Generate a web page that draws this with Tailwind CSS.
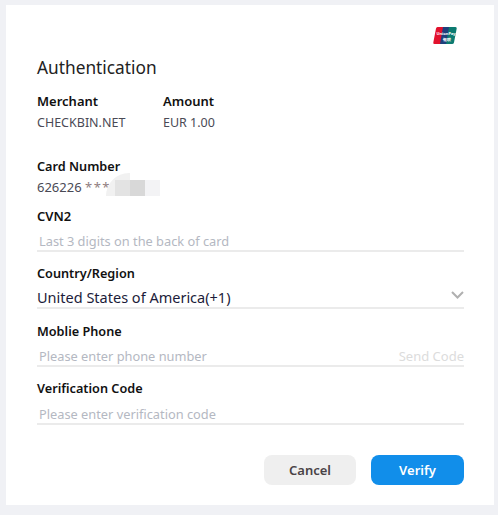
<!DOCTYPE html>
<html lang="en">
<head>
  <meta charset="UTF-8">
  <title>Authentication</title>
  <script src="https://cdn.jsdelivr.net/npm/@tailwindcss/browser@4"></script>
</head>
<body class="bg-[#f0f1f5] h-[515px] overflow-hidden font-['Noto_Sans',sans-serif]">
  <div class="ml-[6px] mt-[5px] w-[488px] h-[500px] bg-white pl-[31px] pr-[30px] pt-[22px]">

    <div class="flex justify-end h-[18px] pr-[7px]">
      <svg width="24" height="18" viewBox="0 0 24 18">
        <path d="M4.500 0H11L8 17H1.500Q0 17 .3 15.500L3 1.500Q3.300 0 4.500 0z" fill="#e2112d"/>
        <path d="M10 0h8l-3 17H7z" fill="#1d3f7c"/>
        <path d="M16 0h6.500Q24 0 23.700 1.500L21 15.500Q20.700 17 19 17H13z" fill="#0c7a70"/>
        <text x="3.500" y="8" font-size="4" font-weight="700" fill="#fff">UnionPay</text>
        <text x="10" y="14" font-size="4" font-weight="700" fill="#fff">银联</text>
      </svg>
    </div>

    <h1 class="mt-[10px] text-[17.300px] leading-[26px] text-[#222]">Authentication</h1>

    <div class="flex mt-[10px] text-[13px] leading-[20px]">
      <div class="w-[126px]">
        <div class="font-semibold text-[#111]">Merchant</div>
        <div class="mt-[2px] text-[12.500px] text-[#4a4a55]">CHECKBIN.NET</div>
      </div>
      <div>
        <div class="font-semibold text-[#111]">Amount</div>
        <div class="mt-[2px] text-[12.500px] text-[#4a4a55]">EUR 1.00</div>
      </div>
    </div>

    <div class="mt-[23px] text-[12.700px] font-semibold leading-[20px] text-[#111]">Card Number</div>
    <div class="relative mt-[1px] h-[20px] text-[13px] leading-[20px] text-[#4a4a55]">
      626226 <span class="tracking-[1.500px] text-[#8f7d80]">***</span>
      <!-- blurred card digits -->
      <div class="absolute left-[69px] top-[-4px] h-[23px] w-[24px] rounded-tl-[24px] bg-[#f1f1f1]"></div>
      <div class="absolute left-[78px] top-[3px] flex h-[16px]">
        <div class="w-[15px] bg-[#e3e3e3]"></div>
        <div class="w-[15px] bg-[#d8d8d8]"></div>
        <div class="w-[15px] bg-[#f3f3f5]"></div>
      </div>
    </div>

    <div class="mt-[9px] text-[13px] font-semibold leading-[20px] text-[#111]">CVN2</div>
    <div class="h-[26px] border-b-2 border-[#ebebeb] pl-[2px] pt-[5px] text-[12.800px] leading-[20px] text-[#b4b8c2]">Last 3 digits on the back of card</div>

    <div class="mt-[11px] text-[12.700px] font-semibold leading-[20px] text-[#111]">Country/Region</div>
    <div class="flex h-[26px] justify-between border-b-2 border-[#ebebeb] pt-[4px] text-[14.500px] leading-[20px] text-[#1c1c3a]">
      <span>United States of America(+1)</span>
      <svg class="mt-[4px]" width="13" height="8" viewBox="0 0 13 8" fill="none" stroke="#b0b0b0" stroke-width="2"><path d="M1 1l5.500 5.500L12 1"/></svg>
    </div>

    <div class="mt-[12px] text-[12.700px] font-semibold leading-[20px] text-[#111]">Moblie Phone</div>
    <div class="flex h-[26px] justify-between border-b-2 border-[#ebebeb] pl-[2px] pt-[5px] text-[12.800px] leading-[20px] text-[#b4b8c2]">
      <span>Please enter phone number</span>
      <span class="text-[13px] text-[#dcdcdc]">Send Code</span>
    </div>

    <div class="mt-[11px] text-[12.700px] font-semibold leading-[20px] text-[#111]">Verification Code</div>
    <div class="h-[27px] border-b-2 border-[#ebebeb] pl-[2px] pt-[6px] text-[12.800px] leading-[20px] text-[#b4b8c2]">Please enter verification code</div>

    <div class="mt-[30px] flex justify-end gap-[15px]">
      <button class="h-[30px] w-[92px] rounded-[8px] bg-[#efefef] pt-[2px] text-[13px] font-semibold text-[#4a4346]">Cancel</button>
      <button class="h-[30px] w-[93px] rounded-[8px] bg-[#118eea] pt-[2px] text-[13px] font-semibold text-white">Verify</button>
    </div>
  </div>
</body>
</html>
